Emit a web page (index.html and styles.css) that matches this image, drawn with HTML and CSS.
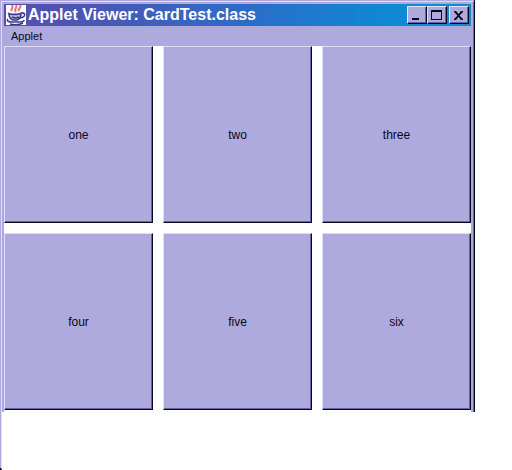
FILE: index.html
```html
<!DOCTYPE html>
<html lang="en">
<head>
<meta charset="utf-8">
<title>Applet Viewer: CardTest.class</title>
<link rel="stylesheet" href="styles.css">
</head>
<body>

<div class="window">
  <div class="inner">
    <div class="titlebar">
      <svg class="logo" width="20" height="20" viewBox="0 0 20 20" fill="none">
        <rect width="20" height="20" fill="#fff"/>
        <path d="M6 6C4 4 8 3 6 0M10 7C7 4 12 3 10 0M13 6C11 4 16 3 14 0" stroke="#e4707c" stroke-width="2"/>
        <path d="M3 8h12c0 4-1 6-4 7H7C4 14 3 12 3 8z" fill="#c4c0e8"/>
        <path d="M2 8c2 2 11 2 13 0M3 9c0 3 1 5 4 6h4c3-1 4-3 4-6M15 8c5-1 5 4-1 5M6 12c2 1 5 1 7 0" stroke="#38388c" stroke-width="1.6"/>
        <path d="M2 14c-2 2 1 3 4 3h7c3 0 5-1 5-2M4 19c4 1 9 1 13-1" stroke="#38388c" stroke-width="1.6"/>
      </svg>
      <h1>Applet Viewer: CardTest.class</h1>
      <div class="controls">
        <button aria-label="Minimize"><svg width="17" height="16" viewBox="0 0 17 16"><path d="M4 11h7v2H4z"/></svg></button>
        <button aria-label="Maximize"><svg width="17" height="16" viewBox="0 0 17 16"><path d="M3 3h11v10H3zM4 5v7h9V5z" fill-rule="evenodd"/></svg></button>
        <button class="close" aria-label="Close"><svg width="17" height="16" viewBox="0 0 17 16"><path d="M4 4h2l2.500 3L11 4h2v1L9.500 8.500 13 12v1h-2l-2.500-3L6 13H4v-1l3.500-3.500L4 5z"/></svg></button>
      </div>
    </div>
    <div class="menubar"><button>Applet</button></div>
    <div class="cards">
      <button>one</button>
      <button>two</button>
      <button>three</button>
      <button>four</button>
      <button>five</button>
      <button>six</button>
    </div>
  </div>
</div>
<div class="edge"></div>

</body>
</html>
```

FILE: styles.css
```css
* {
  box-sizing:border-box;
}

body {
  margin:0;
  min-height:100vh;
  display:flex;
  flex-direction:column;
  background:#fff;
  color:#080820;
  font-family:"Liberation Sans", Arial, sans-serif;
  font-size:12px;
}

button {
  font:inherit;
  color:inherit;
  padding:0;
  border:0;
  background:#aeaadd;
}

.window {
  margin-right:37px;
  background:#aeaadd;
  border-right:1px solid #080820;
  padding:1px 0 0 1px;
}

.inner {
  border-top:1px solid #dedcf8;
  border-left:1px solid #dedcf8;
  border-right:1px solid #6762a8;
  padding:2px 2px 0 2px;
}

.titlebar {
  display:flex;
  align-items:center;
  height:22px;
  padding:0 2px;
  background:linear-gradient(to right, #5a4cae, #2c6cc8 52%, #1088d4 82%);
}

.logo {
  flex:none;
}

.titlebar h1 {
  flex:1;
  margin:0 0 0 2px;
  color:#fff;
  font-size:16px;
  line-height:20px;
  white-space:nowrap;
}

.controls {
  display:flex;
}

.controls button {
  width:20px;
  height:18px;
  border:1px solid;
  border-color:#e6e4fa #080820 #080820 #e6e4fa;
  box-shadow:inset -1px -1px #6762a8;
}

.controls svg {
  display:block;
  fill:#080820;
}

.controls .close {
  margin-left:2px;
}

.menubar {
  height:20px;
  padding-left:7px;
}

.menubar button {
  font-size:11px;
  line-height:20px;
}

.cards {
  display:grid;
  grid-template-columns:repeat(3, 1fr);
  grid-auto-rows:177px;
  gap:10px;
  padding-bottom:2px;
  background:#fff;
}

.cards button {
  border:1px solid;
  border-color:#dedcf8 #080820 #080820 #dedcf8;
  box-shadow:inset -1px -1px #6762a8;
}

/* left frame running on below the window */
.edge {
  flex:1;
  width:2px;
  background:#aeaadd;
  border-right:1px solid #dedcf8;
  border-bottom:2px solid #080820;
}
```
